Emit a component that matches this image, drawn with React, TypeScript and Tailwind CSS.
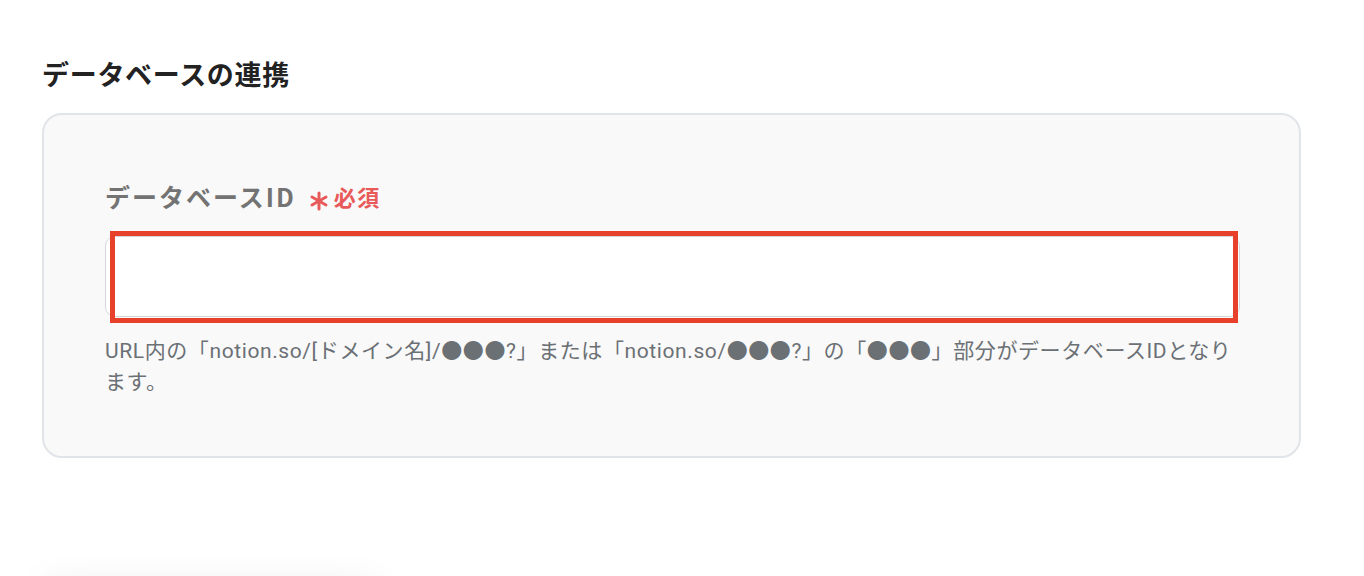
const JP = "font-['Noto_Sans_CJK_JP',sans-serif]";

function RequiredMark() {
  return (
    <span className="ml-[4px] flex items-center gap-[4px] text-[#e85a5a]">
      <svg width="22" height="20" viewBox="0 0 22 20" className="mt-[9px]" fill="none" stroke="currentColor" strokeWidth="3" strokeLinecap="round">
        <line x1="11" y1="2" x2="11" y2="18" />
        <line x1="4" y1="6" x2="18" y2="14" />
        <line x1="4" y1="14" x2="18" y2="6" />
      </svg>
      <span className="text-[22px] font-semibold leading-[30px] tracking-[1.5px]">必須</span>
    </span>
  );
}

export default function App() {
  return (
    <div className={`relative min-h-[576px] overflow-hidden bg-white px-[42px] pt-[57px] ${JP}`}>
      {/* Section title */}
      <h2 className="text-[27px] font-bold leading-[34px] tracking-[0.7px] text-[#222222]">データベースの連携</h2>

      {/* Form card */}
      <div className="mt-[22px] w-[1259px] rounded-[20px] border-2 border-[#e1e4e8] bg-[#f9f9f9] pl-[61px] pr-[59px] pt-[66px] pb-[58px]">
        <div className="flex items-center gap-[8px]">
          <span className="text-[25px] font-bold leading-[30px] tracking-[2px] text-[#737373]">データベースID</span>
          <RequiredMark />
        </div>

        <div className="relative mt-[25px]">
          <input
            type="text"
            className="block h-[81px] w-full rounded-[10px] border-[1.5px] border-[#d3d7dc] bg-white px-4 text-[16px] outline-none"
          />
          {/* annotation frame */}
          <div className="pointer-events-none absolute left-[5px] top-[-5px] h-[92px] w-[1128px] border-[5px] border-[#e8412b]" />
        </div>

        <p className="mt-[19px] text-[21px] leading-[31px] tracking-[0.6px] text-[#6b7075] font-['Roboto','Noto_Sans_CJK_JP',sans-serif]">
          URL内の「notion.so/[ドメイン名]/●●●?」または「notion.so/●●●?」の「●●●」部分がデータベースIDとなり
          <br />
          ます。
        </p>
      </div>

      {/* next card peeking in at the bottom */}
      <div className="absolute left-[40px] top-[584px] h-[80px] w-[340px] rounded-[16px] bg-white shadow-[0_0_36px_rgba(0,0,0,0.08)]" />
    </div>
  );
}
